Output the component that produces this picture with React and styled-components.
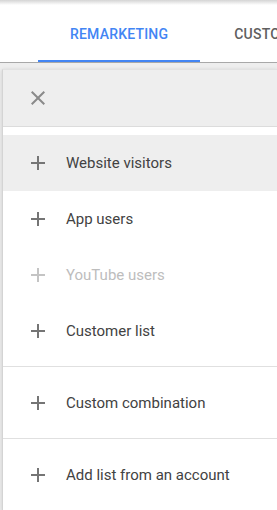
import React from 'react'
import styled, { createGlobalStyle } from 'styled-components'

const GlobalStyle = createGlobalStyle`
  html, body {
    margin: 0;
    padding: 0;
    background: #eeeeee;
    font-family: Roboto, "Liberation Sans", Arial, sans-serif;
  }
`;

const TopShade = styled.div`
  height: 5px;
  background: linear-gradient(#d4d4d4, #ffffff);
`;

const TabBar = styled.div`
  display: flex;
  gap: 2px;
  height: 57px;
  padding-left: 38px;
  background: #ffffff;
  border-bottom: 1px solid #a8a8a8;
  overflow: hidden;
`;

const Tab = styled.div`
  flex-shrink: 0;
  min-width: 160px;
  padding: 0 32px;
  box-sizing: border-box;
  display: flex;
  align-items: center;
  justify-content: center;
  font-size: 14px;
  font-weight: 500;
  letter-spacing: 0.2px;
  text-transform: uppercase;
  color: ${p => (p.$active ? '#4285f4' : '#5f5f5f')};
  box-shadow: ${p => (p.$active ? 'inset 0 -2px 0 #4285f4' : 'none')};
`;

const Stage = styled.div`
  padding: 6px 0 0 2px;
`;

const Panel = styled.div`
  background: #ffffff;
  border-left: 1px solid #d4d4d4;
  border-top: 1px solid #e2e2e2;
  box-shadow: 0 1px 4px rgba(0, 0, 0, 0.15);
`;

const Header = styled.div`
  height: 56px;
  display: flex;
  align-items: center;
  padding-left: 23px;
  background: #eeeeee;
  border-bottom: 1px solid #dcdcdc;
`;

const Section = styled.div`
  padding: 8px 0 7px;
  & + & {
    border-top: 1px solid #e0e0e0;
  }
`;

const Row = styled.div`
  height: 56px;
  display: flex;
  align-items: center;
  gap: 16px;
  padding-left: 23px;
  font-size: 15px;
  color: ${p => (p.$disabled ? '#bdbdbd' : '#424242')};
  background: ${p => (p.$hover ? '#eeeeee' : 'transparent')};
`;

const Icon = styled.svg`
  width: 24px;
  height: 24px;
  flex-shrink: 0;
  fill: ${p => p.$color || '#757575'};
`;

const PlusIcon = ({ disabled }) => (
  <Icon viewBox="0 0 24 24" $color={disabled ? '#c4c4c4' : '#757575'}>
    <path d="M19 13h-6v6h-2v-6H5v-2h6V5h2v6h6v2z" />
  </Icon>
)

const CloseIcon = () => (
  <Icon viewBox="0 0 24 24" $color="#8a8a8a">
    <path d="M19 6.41L17.59 5 12 10.59 6.41 5 5 6.41 10.59 12 5 17.59 6.41 19 12 13.41 17.59 19 19 17.59 13.41 12z" />
  </Icon>
)

const groups = [
  [
    { label: 'Website visitors', hover: true },
    { label: 'App users' },
    { label: 'YouTube users', disabled: true },
    { label: 'Customer list' },
  ],
  [{ label: 'Custom combination' }],
  [{ label: 'Add list from an account' }],
]

export default function App () {
  return (
    <>
      <GlobalStyle />
      <TopShade />
      <TabBar>
        <Tab $active>Remarketing</Tab>
        <Tab>Custom audiences</Tab>
      </TabBar>
      <Stage>
        <Panel>
          <Header>
            <CloseIcon />
          </Header>
          {groups.map((items, i) => (
            <Section key={i}>
              {items.map(item => (
                <Row key={item.label} $hover={item.hover} $disabled={item.disabled}>
                  <PlusIcon disabled={item.disabled} />
                  {item.label}
                </Row>
              ))}
            </Section>
          ))}
        </Panel>
      </Stage>
    </>
  )
}
